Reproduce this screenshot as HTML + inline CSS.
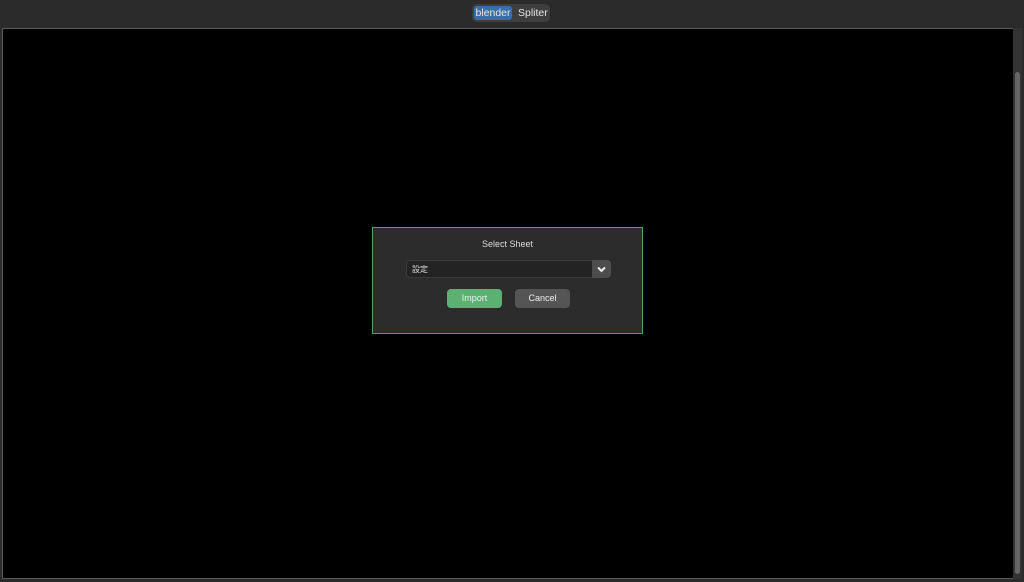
<!DOCTYPE html>
<html><head><meta charset="utf-8"><style>
body{margin:0;width:1024px;height:582px;background:#2b2b2b;position:relative;overflow:hidden;font-family:"Liberation Sans","Noto Sans CJK JP",sans-serif}
.seg{position:absolute;left:472px;top:4px;width:78px;height:18px;background:#3e3e3e;border-radius:5px;font-size:10.5px;color:#e6e6e6}
.seg .b{position:absolute;left:2px;top:2px;width:38px;height:14px;background:#3a6ea8;border-radius:3px;text-align:center;line-height:14px}
.seg .s{position:absolute;left:46px;top:2px;line-height:15px}
.frame{position:absolute;left:2px;top:28px;width:1010px;height:549px;border:1px solid #5a5a5a;background:#000}
.track{position:absolute;left:1013px;top:28px;width:9px;height:551px;background:#333}
.thumb{position:absolute;left:1015px;top:72px;width:5px;height:502px;background:#666;border-radius:3px}
.dlg{position:absolute;left:372px;top:227px;width:269px;height:105px;border:1.5px solid #5a9f68;background:#2c2c2c}
.t{position:absolute;top:11px;width:100%;text-align:center;color:#ddd;font-size:9px}
.sel{position:absolute;left:33px;top:32px;height:18px;border-radius:4px;background:#232323;border:1px solid #3a3a3a;color:#ddd;font-size:8px;line-height:18px;padding-left:5px;box-sizing:border-box;width:205px}
.arr{position:absolute;left:219px;top:32px;width:19px;height:18px;background:#4d4d4d;border-radius:0 4px 4px 0}
.btn{position:absolute;top:61px;width:55px;height:19px;border-radius:4px;color:#eee;font-size:9px;text-align:center;line-height:19px}
</style></head><body>
<div class="seg"><div class="b">blender</div><div class="s">Spliter</div></div>
<div class="frame"></div>
<div class="track"></div><div class="thumb"></div>
<div class="dlg">
<div class="t">Select Sheet</div>
<div class="sel">設定</div>
<div class="arr"><svg width="19" height="18"><path d="M6 7.5 L9.5 11 L13 7.5" stroke="#eee" stroke-width="2" fill="none"/></svg></div>
<div class="btn" style="left:74px;background:#5bb072">Import</div>
<div class="btn" style="left:142px;background:#555">Cancel</div>
</div>
</body></html>
